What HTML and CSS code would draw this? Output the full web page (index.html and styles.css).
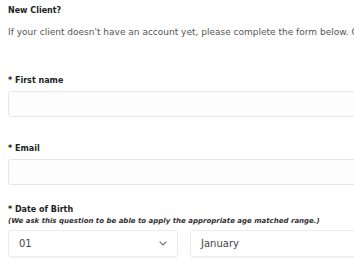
FILE: index.html
```html
<!DOCTYPE html>
<html>
<head>
<meta charset="utf-8">
<link rel="stylesheet" href="styles.css">
</head>
<body>
<div class="page">
  <h2 class="title">New Client?</h2>
  <p class="intro">If your client doesn't have an account yet, please complete the form below. Once</p>
  <div class="field first">
    <label class="label">* First name</label>
    <div class="input"></div>
  </div>
  <div class="field email">
    <label class="label">* Email</label>
    <div class="input"></div>
  </div>
  <div class="field dob">
    <label class="label">* Date of Birth</label>
    <div class="note">(We ask this question to be able to apply the appropriate age matched range.)</div>
    <div class="selects">
      <div class="select day"><span>01</span>
        <svg class="chev" width="8" height="5" viewBox="0 0 8 5"><path d="M1 1l3 3 3-3" fill="none" stroke="#777" stroke-width="1.1" stroke-linecap="round" stroke-linejoin="round"/></svg>
      </div>
      <div class="select month"><span>January</span></div>
    </div>
  </div>
</div>
</body>
</html>
```
FILE: styles.css
```css
html, body { margin: 0; padding: 0; background: #fff; }
body { width: 354px; height: 266px; overflow: hidden; font-family: "DejaVu Sans", sans-serif; }
.page { padding: 0 0 0 8px; width: 500px; }
.title { margin: 0; padding-top: 6px; font-size: 8px; font-weight: 700; color: #222; line-height: 10px; }
.intro { margin: 10px 0 0; font-size: 9px; color: #555; line-height: 12px; white-space: nowrap; }
.field { display: flex; flex-direction: column; }
.first { margin-top: 38px; }
.email { margin-top: 27px; }
.dob { margin-top: 20px; }
.label { font-size: 8px; font-weight: 700; color: #222; line-height: 10px; }
.input { margin-top: 5px; height: 24px; border: 1px solid #e6e6e6; border-radius: 3px; background: #fdfdfd; width: 480px; }
.note { margin-top: 1px; font-size: 7px; font-style: italic; font-weight: 700; color: #333; line-height: 11px; }
.selects { display: flex; gap: 12px; margin-top: 3px; }
.select { height: 27px; border: 1px solid #ececec; border-radius: 3px; box-shadow: 0 1px 2px rgba(0,0,0,0.06); display: flex; align-items: center; justify-content: space-between; padding: 0 10px; font-size: 10px; color: #444; box-sizing: border-box; }
.day { width: 170px; }
.month { width: 200px; }
```
